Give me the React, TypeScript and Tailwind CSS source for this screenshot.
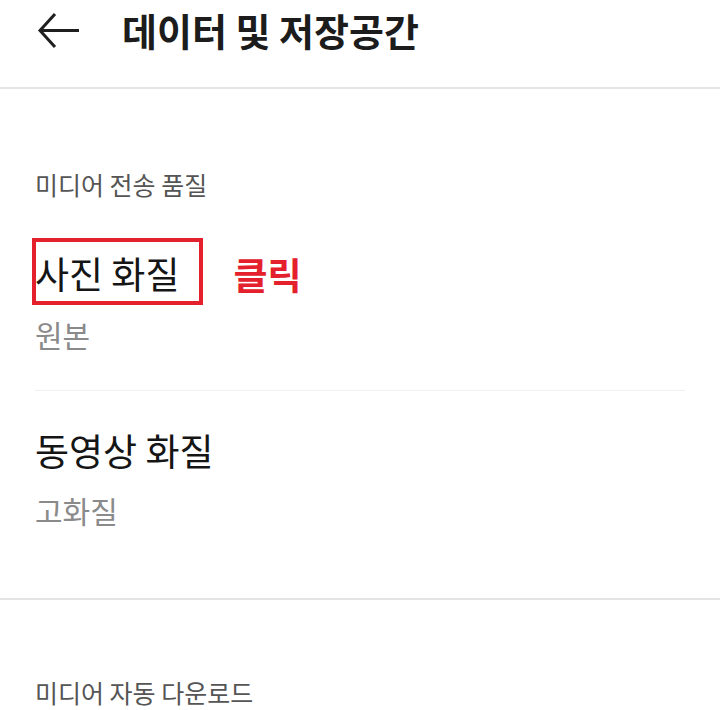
export default function App() {
  const font = {
    fontFamily: '"Noto Sans CJK KR", "Noto Sans", sans-serif',
  };

  return (
    <div className="w-[720px] h-[710px] overflow-hidden bg-white" style={font}>
      {/* 상단 헤더 */}
      <div className="h-[89px] border-b-2 border-[#e6e6e6] flex items-start">
        <button className="ml-[36px] mt-[12px] w-[46px] h-[38px] flex items-center justify-center">
          <svg width="46" height="38" viewBox="0 0 46 38" fill="none">
            <path
              d="M43 18.5H5M19 2L4 18.5L19 35"
              stroke="#1f1f1f"
              strokeWidth="3"
            />
          </svg>
        </button>
        <h1 className="ml-[40px] mt-[5px] text-[38px] leading-[50px] font-bold text-[#1c1c1c]">
          데이터 및 저장공간
        </h1>
      </div>

      {/* 미디어 전송 품질 */}
      <div className="px-[35px] pt-[80px] border-b-2 border-[#e4e4e4] h-[511px]">
        <p className="text-[25px] leading-[30px] text-[#555]">미디어 전송 품질</p>

        <div className="mt-[50px] flex items-center">
          <div className="relative">
            <span className="block text-[37px] leading-[44px] text-[#151515]">
              사진 화질
            </span>
            <span className="absolute -left-[3px] -top-[13px] w-[171px] h-[67px] border-4 border-[#e3202b]" />
          </div>
          <span className="ml-[54px] mt-[3px] text-[37px] leading-[44px] font-bold text-[#e3202b]">
            클릭
          </span>
        </div>
        <p className="mt-[20px] text-[30px] leading-[36px] text-[#8a8a8a]">원본</p>

        <div className="mt-[38px] border-b border-[#f0f0f0]" />

        <p className="mt-[37px] text-[37px] leading-[44px] text-[#151515]">
          동영상 화질
        </p>
        <p className="mt-[20px] text-[30px] leading-[36px] text-[#8a8a8a]">
          고화질
        </p>
      </div>

      {/* 미디어 자동 다운로드 */}
      <div className="px-[35px] pt-[77px]">
        <p className="text-[25px] leading-[30px] text-[#555]">미디어 자동 다운로드</p>
      </div>
    </div>
  );
}
